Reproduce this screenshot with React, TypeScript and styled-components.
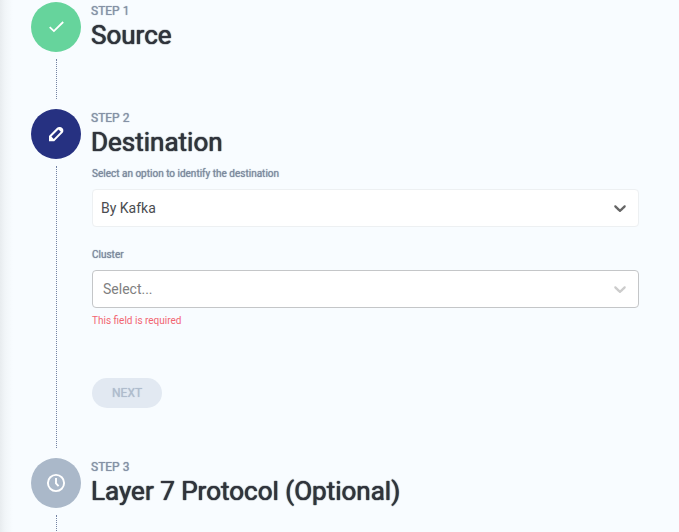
import React, { useId, useState } from "react";
import type { ReactNode } from "react";
import styled, { createGlobalStyle, css } from "styled-components";

const GlobalStyle = createGlobalStyle`
  * { box-sizing: border-box; }
  body {
    margin: 0;
    background: #f8fcff;
    color: #30343c;
    font-family: Roboto, "Liberation Sans", sans-serif;
    overflow: hidden;
  }
`;

const heavy = css`
  font-weight: 400;
  text-shadow: 0 0 1px currentColor;
`;

const Page = styled.main`
  height: 100vh;
  overflow: hidden;
  padding: 2px 40px 0 31px;
  background: linear-gradient(to right, #e8ecef 0, #f1f5f8 5px, #f8fcff 13px);
`;

const Steps = styled.ol`
  margin: 0;
  padding: 0;
  list-style: none;
`;

const StepItem = styled.li`
  display: grid;
  grid-template-columns: 50px minmax(0, 1fr);
  column-gap: 10px;
`;

const Rail = styled.div`
  display: flex;
  flex-direction: column;
  align-items: center;
`;

const Badge = styled.span<{ $color: string }>`
  display: flex;
  flex: none;
  align-items: center;
  justify-content: center;
  width: 50px;
  height: 50px;
  border-radius: 50%;
  background: ${(p) => p.$color};
`;

const Connector = styled.span`
  flex: 1;
  width: 1px;
  min-height: 40px;
  margin: 7px 0 10px;
  border-left: 1px dotted #7483a3;
`;

const StepLabel = styled.p`
  margin: 0;
  padding-top: 2px;
  font-size: 12px;
  line-height: 14px;
  color: #8491a5;
  ${heavy}
`;

const StepTitle = styled.h2`
  margin: 0;
  font-size: 26px;
  line-height: 34px;
  font-weight: 400;
  text-shadow: 0 0 1px currentColor, 0 0 1px currentColor;
`;

const Form = styled.form`
  display: flex;
  flex-direction: column;
  align-items: flex-start;
  padding: 8px 0 50px 1px;
`;

const Field = styled.div`
  display: flex;
  flex-direction: column;
  width: 100%;
  margin-bottom: 21px;
`;

const FieldLabel = styled.label`
  margin-bottom: 8px;
  font-size: 10px;
  line-height: 14px;
  color: #7b899d;
  ${heavy}
`;

const SelectBox = styled.div`
  display: grid;
  align-items: center;
  & > * { grid-area: 1 / 1; }
  & > svg {
    justify-self: end;
    margin-right: 9px;
    pointer-events: none;
  }
`;

const Select = styled.select<{ $outlined?: boolean }>`
  appearance: none;
  width: 100%;
  height: 38px;
  padding: 0 40px 0 ${(p) => (p.$outlined ? 10 : 8)}px;
  border: 1px solid ${(p) => (p.$outlined ? "#c4c6c8" : "#edf0f2")};
  border-radius: 4px;
  background: #fff;
  color: ${(p) => (p.$outlined ? "#808080" : "#4a4c50")};
  font-family: inherit;
  font-size: 14px;
`;

const ErrorText = styled.p`
  margin: 6px 0 0;
  font-size: 10px;
  line-height: 14px;
  color: #f26571;
`;

const NextButton = styled.button`
  height: 30px;
  margin-top: 29px;
  padding: 0 20px;
  border: 0;
  border-radius: 15px;
  background: #e2e9f2;
  color: #afbccd;
  font-family: inherit;
  font-size: 12px;
  ${heavy}
`;

const CheckIcon = () => (
  <svg width="20" height="20" viewBox="0 0 20 20" fill="none" stroke="#fff" strokeWidth="1.8" aria-hidden="true">
    <path d="M3.7 10.1 7.9 14.1 17.2 5" />
  </svg>
);

const PencilIcon = () => (
  <svg width="20" height="20" viewBox="0 0 20 20" aria-hidden="true">
    <path
      fill="#fff"
      fillRule="evenodd"
      d="M3 17.3V11.9L11.1 3.8Q12 2.9 13.1 2.9H14.2Q15 2.9 15.6 3.5L16.7 4.6Q17.3 5.2 17.3 6V7.2Q17.3 8 16.6 8.7L8.2 17.3ZM5.4 12.6 7.7 14.9 14.8 7.8 12.5 5.5Z"
    />
  </svg>
);

const ClockIcon = () => (
  <svg width="20" height="20" viewBox="0 0 20 20" fill="none" stroke="#fff" aria-hidden="true">
    <circle cx="10" cy="10" r="8.1" strokeWidth="1.9" />
    <path d="M10 5V10.3L12.6 13.2" strokeWidth="1.9" />
  </svg>
);

const Chevron = ({ color }: { color: string }) => (
  <svg width="20" height="20" viewBox="0 0 20 20" fill={color} aria-hidden="true">
    <path d="M4.516 7.548c0.436-0.446 1.043-0.481 1.576 0l3.908 3.747 3.908-3.747c0.533-0.481 1.141-0.446 1.574 0 0.436 0.445 0.408 1.197 0 1.615-0.406 0.418-4.695 4.502-4.695 4.502-0.217 0.223-0.502 0.335-0.787 0.335s-0.57-0.112-0.789-0.335c0 0-4.287-4.084-4.695-4.502s-0.436-1.17 0-1.615z" />
  </svg>
);

type StepProps = {
  number: number;
  title: string;
  color: string;
  icon: ReactNode;
  children?: ReactNode;
};

const Step = ({ number, title, color, icon, children }: StepProps) => (
  <StepItem>
    <Rail>
      <Badge $color={color}>{icon}</Badge>
      <Connector />
    </Rail>
    <div>
      <StepLabel>STEP {number}</StepLabel>
      <StepTitle>{title}</StepTitle>
      {children}
    </div>
  </StepItem>
);

export default function App() {
  const id = useId();
  const [method, setMethod] = useState("kafka");
  const [cluster, setCluster] = useState("");

  return (
    <>
      <GlobalStyle />
      <Page>
        <Steps>
          <Step number={1} title="Source" color="#66d49c" icon={<CheckIcon />} />
          <Step number={2} title="Destination" color="#263181" icon={<PencilIcon />}>
            <Form onSubmit={(e) => e.preventDefault()}>
              <Field>
                <FieldLabel htmlFor={`${id}-method`}>Select an option to identify the destination</FieldLabel>
                <SelectBox>
                  <Select id={`${id}-method`} value={method} onChange={(e) => setMethod(e.target.value)}>
                    <option value="kafka">By Kafka</option>
                  </Select>
                  <Chevron color="#666" />
                </SelectBox>
              </Field>
              <Field>
                <FieldLabel htmlFor={`${id}-cluster`}>Cluster</FieldLabel>
                <SelectBox>
                  <Select
                    $outlined
                    id={`${id}-cluster`}
                    value={cluster}
                    aria-describedby={`${id}-error`}
                    onChange={(e) => setCluster(e.target.value)}
                  >
                    <option value="">Select...</option>
                  </Select>
                  <Chevron color="#ccc" />
                </SelectBox>
                <ErrorText id={`${id}-error`}>This field is required</ErrorText>
              </Field>
              <NextButton type="submit" disabled>NEXT</NextButton>
            </Form>
          </Step>
          <Step number={3} title="Layer 7 Protocol (Optional)" color="#aab8c9" icon={<ClockIcon />} />
        </Steps>
      </Page>
    </>
  );
}
